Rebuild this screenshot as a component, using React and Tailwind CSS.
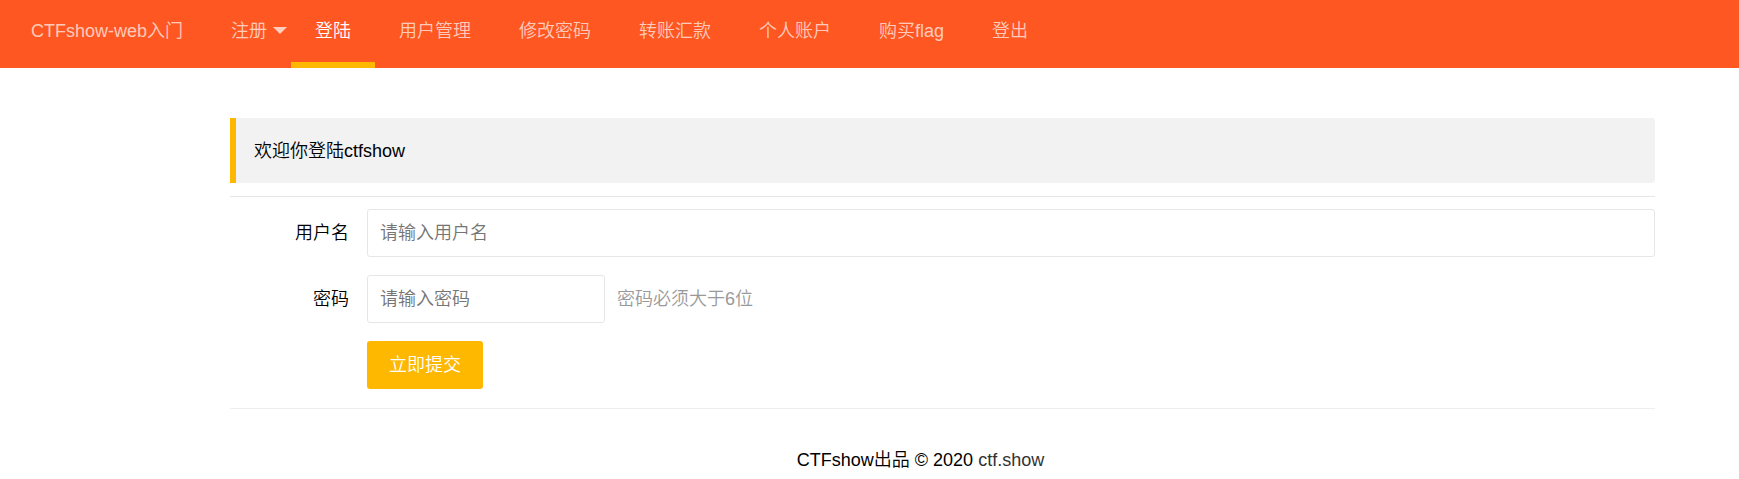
const navItems = [
  { label: "CTFshow-web入门" },
  { label: "注册", hasMenu: true },
  { label: "登陆", active: true },
  { label: "用户管理" },
  { label: "修改密码" },
  { label: "转账汇款" },
  { label: "个人账户" },
  { label: "购买flag" },
  { label: "登出" },
];

function NavItem({ label, hasMenu, active }) {
  return (
    <li className="relative">
      <a
        href="#"
        className={
          active
            ? "block h-[68px] border-b-6 border-[#ffb800] px-6 leading-[62px] text-white"
            : "block h-[68px] px-6 leading-[62px] text-white/70"
        }
      >
        {label}
      </a>
      {hasMenu && (
        <svg
          className="absolute top-[27px] right-1 h-[7px] w-[14px] fill-white/70"
          viewBox="0 0 14 7"
          aria-hidden="true"
        >
          <path d="M0 0h14L7 7z" />
        </svg>
      )}
    </li>
  );
}

export default function App() {
  return (
    <div className="bg-white font-['Liberation_Sans','Noto_Sans_CJK_SC',sans-serif] text-[18px] leading-6 font-[350] text-black">
      <header className="bg-[#ff5722] px-[7px]">
        <nav>
          <ul className="flex whitespace-nowrap">
            {navItems.map((item) => (
              <NavItem key={item.label} {...item} />
            ))}
          </ul>
        </nav>
      </header>

      <div className="mr-[84px] ml-[230px] pt-[50px]">
        <main>
          <blockquote className="rounded-r-[3px] border-l-6 border-[#ffb800] bg-[#f2f2f2] pt-[21px] pb-5 pl-[18px]">
            欢迎你登陆ctfshow
          </blockquote>
          <hr className="mt-[13px] mb-3 border-[#e6e6e6]" />

          <form className="flex flex-col gap-[18px]" onSubmit={(e) => e.preventDefault()}>
            <div className="flex items-center">
              <label htmlFor="username" className="w-[137px] pr-[18px] text-right">
                用户名
              </label>
              <input
                id="username"
                type="text"
                placeholder="请输入用户名"
                className="h-12 min-w-0 flex-1 rounded-[3px] border border-[#e6e6e6] bg-white px-3 placeholder:text-[#757575]"
              />
            </div>
            <div className="flex items-center">
              <label htmlFor="password" className="w-[137px] pr-[18px] text-right">
                密码
              </label>
              <input
                id="password"
                type="password"
                placeholder="请输入密码"
                className="h-12 w-[238px] rounded-[3px] border border-[#e6e6e6] bg-white px-3 placeholder:text-[#757575]"
              />
              <span className="ml-3 text-[#999999]">密码必须大于6位</span>
            </div>
            <div className="flex pl-[137px]">
              <button
                type="submit"
                className="h-12 rounded-[3px] bg-[#ffb800] px-[22px] text-white"
              >
                立即提交
              </button>
            </div>
          </form>
          <hr className="mt-[19px] border-[#eeeeee]" />
        </main>

        <footer className="pt-[39px] pr-11 pb-2 text-center">
          CTFshow出品 © 2020{" "}
          <a href="#" className="text-[#333333]">
            ctf.show
          </a>
        </footer>
      </div>
    </div>
  );
}
